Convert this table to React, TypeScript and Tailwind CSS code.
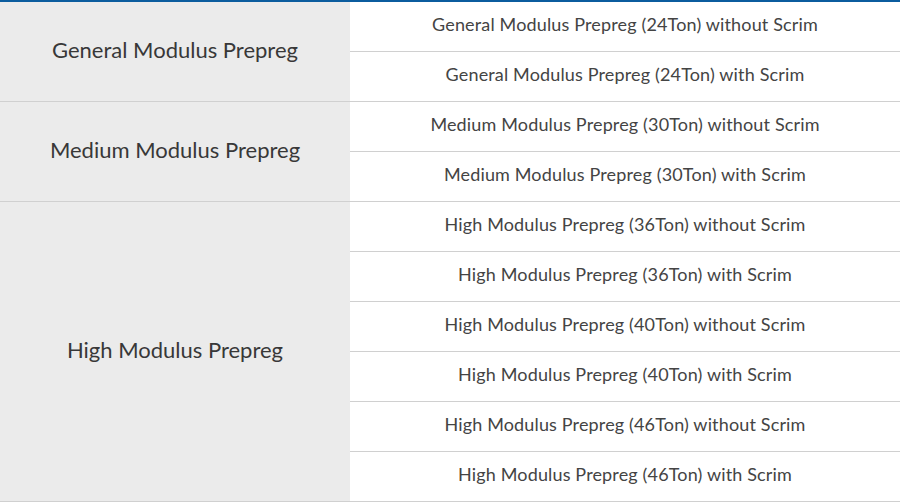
const groups = [
  {
    name: "General Modulus Prepreg",
    items: [
      "General Modulus Prepreg (24Ton) without Scrim",
      "General Modulus Prepreg (24Ton) with Scrim",
    ],
  },
  {
    name: "Medium Modulus Prepreg",
    items: [
      "Medium Modulus Prepreg (30Ton) without Scrim",
      "Medium Modulus Prepreg (30Ton) with Scrim",
    ],
  },
  {
    name: "High Modulus Prepreg",
    items: [
      "High Modulus Prepreg (36Ton) without Scrim",
      "High Modulus Prepreg (36Ton) with Scrim",
      "High Modulus Prepreg (40Ton) without Scrim",
      "High Modulus Prepreg (40Ton) with Scrim",
      "High Modulus Prepreg (46Ton) without Scrim",
      "High Modulus Prepreg (46Ton) with Scrim",
    ],
  },
];

const App = () => {
  return (
    <div className="w-[900px] h-[502px] bg-white border-t-2 border-[#0b5c9e] font-['Lato','Noto_Sans',sans-serif]">
      {groups.map((group) => (
        <div key={group.name} className="flex border-b border-[#d0d0d0]">
          <div className="w-[350px] shrink-0 bg-[#ebebeb] flex items-center justify-center pb-[4px] text-[22px] font-normal text-[#383838]">
            {group.name}
          </div>
          <div className="flex-1 flex flex-col">
            {group.items.map((item, i) => {
              const last = i === group.items.length - 1;
              return (
                <div
                  key={item}
                  className={
                    last
                      ? "h-[49px] flex items-center justify-center pb-[5px] text-[18px] font-normal tracking-[0.15px] text-[#444]"
                      : "h-[50px] flex items-center justify-center pb-[5px] text-[18px] font-normal tracking-[0.15px] text-[#444] border-b border-[#d0d0d0]"
                  }
                >
                  {item}
                </div>
              );
            })}
          </div>
        </div>
      ))}
    </div>
  );
};

export default App;
